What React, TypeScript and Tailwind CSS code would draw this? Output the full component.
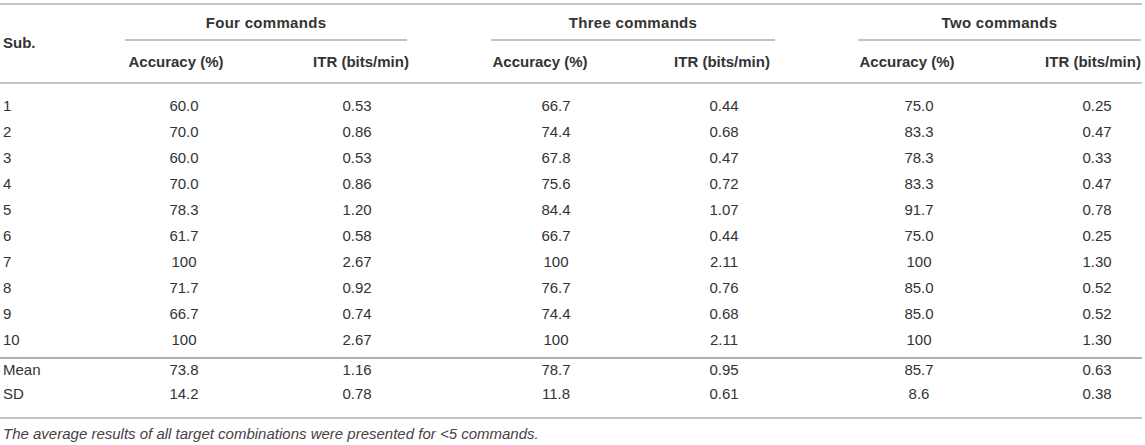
import React from "react";

const rows: [string, string, string, string, string, string, string][] = [
  ["1", "60.0", "0.53", "66.7", "0.44", "75.0", "0.25"],
  ["2", "70.0", "0.86", "74.4", "0.68", "83.3", "0.47"],
  ["3", "60.0", "0.53", "67.8", "0.47", "78.3", "0.33"],
  ["4", "70.0", "0.86", "75.6", "0.72", "83.3", "0.47"],
  ["5", "78.3", "1.20", "84.4", "1.07", "91.7", "0.78"],
  ["6", "61.7", "0.58", "66.7", "0.44", "75.0", "0.25"],
  ["7", "100", "2.67", "100", "2.11", "100", "1.30"],
  ["8", "71.7", "0.92", "76.7", "0.76", "85.0", "0.52"],
  ["9", "66.7", "0.74", "74.4", "0.68", "85.0", "0.52"],
  ["10", "100", "2.67", "100", "2.11", "100", "1.30"],
];

const summary: [string, string, string, string, string, string, string][] = [
  ["Mean", "73.8", "1.16", "78.7", "0.95", "85.7", "0.63"],
  ["SD", "14.2", "0.78", "11.8", "0.61", "8.6", "0.38"],
];

const gridCols =
  "grid grid-cols-[125px_102px_84px_96px_84px_102px_84px_98px_83px_102px_85px_96px]";

function DataRow({ r, h }: { r: string[]; h: string }) {
  return (
    <div className={`${gridCols} ${h} items-center`}>
      <div className="col-start-1 pl-[3px]">{r[0]}</div>
      <div className="col-start-2 text-center pl-[16px] whitespace-nowrap">{r[1]}</div>
      <div className="col-start-4 text-center pr-[4px] whitespace-nowrap">{r[2]}</div>
      <div className="col-start-6 text-center pl-[28px] whitespace-nowrap">{r[3]}</div>
      <div className="col-start-8 text-center pr-[4px] whitespace-nowrap">{r[4]}</div>
      <div className="col-start-10 text-center pl-[20px] whitespace-nowrap">{r[5]}</div>
      <div className="col-start-12 text-center pl-[8px] whitespace-nowrap">{r[6]}</div>
    </div>
  );
}

export default function App() {
  return (
    <div
      className="w-[1145px] h-[445px] bg-white text-[#333333] text-[15px] leading-[18px]"
      style={{ fontFamily: '"Liberation Sans", Arial, Helvetica, sans-serif' }}
    >
      <div className="w-[1142px] pt-[3px]">
        <div className="h-[2px] bg-[#c4c4c4]" />
        {/* Header */}
        <div className={`${gridCols} grid-rows-[36px_41px] font-bold`}>
          <div className="col-start-1 row-start-1 row-span-2 self-center pl-[3px] pb-[2px]">
            Sub.
          </div>
          <div className="col-start-2 col-span-3 row-start-1 flex items-center justify-center border-b-2 border-[#c4c4c4] pt-[1px] tracking-[0.3px]">
            Four commands
          </div>
          <div className="col-start-6 col-span-3 row-start-1 flex items-center justify-center border-b-2 border-[#c4c4c4] pt-[1px] tracking-[0.3px]">
            Three commands
          </div>
          <div className="col-start-10 col-span-3 row-start-1 flex items-center justify-center border-b-2 border-[#c4c4c4] pt-[1px] tracking-[0.3px]">
            Two commands
          </div>
          <div className="col-start-2 row-start-2 flex items-center justify-center whitespace-nowrap">
            Accuracy (%)
          </div>
          <div className="col-start-4 row-start-2 flex items-center justify-center whitespace-nowrap pl-[4px]">
            ITR (bits/min)
          </div>
          <div className="col-start-6 row-start-2 flex items-center justify-center whitespace-nowrap pr-[4px]">
            Accuracy (%)
          </div>
          <div className="col-start-8 row-start-2 flex items-center justify-center whitespace-nowrap pr-[8px]">
            ITR (bits/min)
          </div>
          <div className="col-start-10 row-start-2 flex items-center justify-center whitespace-nowrap pr-[4px]">
            Accuracy (%)
          </div>
          <div className="col-start-12 row-start-2 flex items-center justify-center whitespace-nowrap">
            ITR (bits/min)
          </div>
        </div>
        <div className="h-[2px] bg-[#c4c4c4]" />
        {/* Body */}
        <div className="pt-[9px] pb-[4px]">
          {rows.map((r) => (
            <DataRow key={r[0]} r={r} h="h-[26px]" />
          ))}
        </div>
        <div className="h-[2px] bg-[#b0b0b0]" />
        <div className="pb-[10px]">
          <DataRow r={summary[0]} h="h-[22px]" />
          <DataRow r={summary[1]} h="h-[26px]" />
        </div>
        <div className="h-[2px] bg-[#c4c4c4]" />
        <div className="pt-[6px] pl-[3px] italic text-[15px] text-[#444444]">
          The average results of all target combinations were presented for &lt;5 commands.
        </div>
      </div>
    </div>
  );
}
